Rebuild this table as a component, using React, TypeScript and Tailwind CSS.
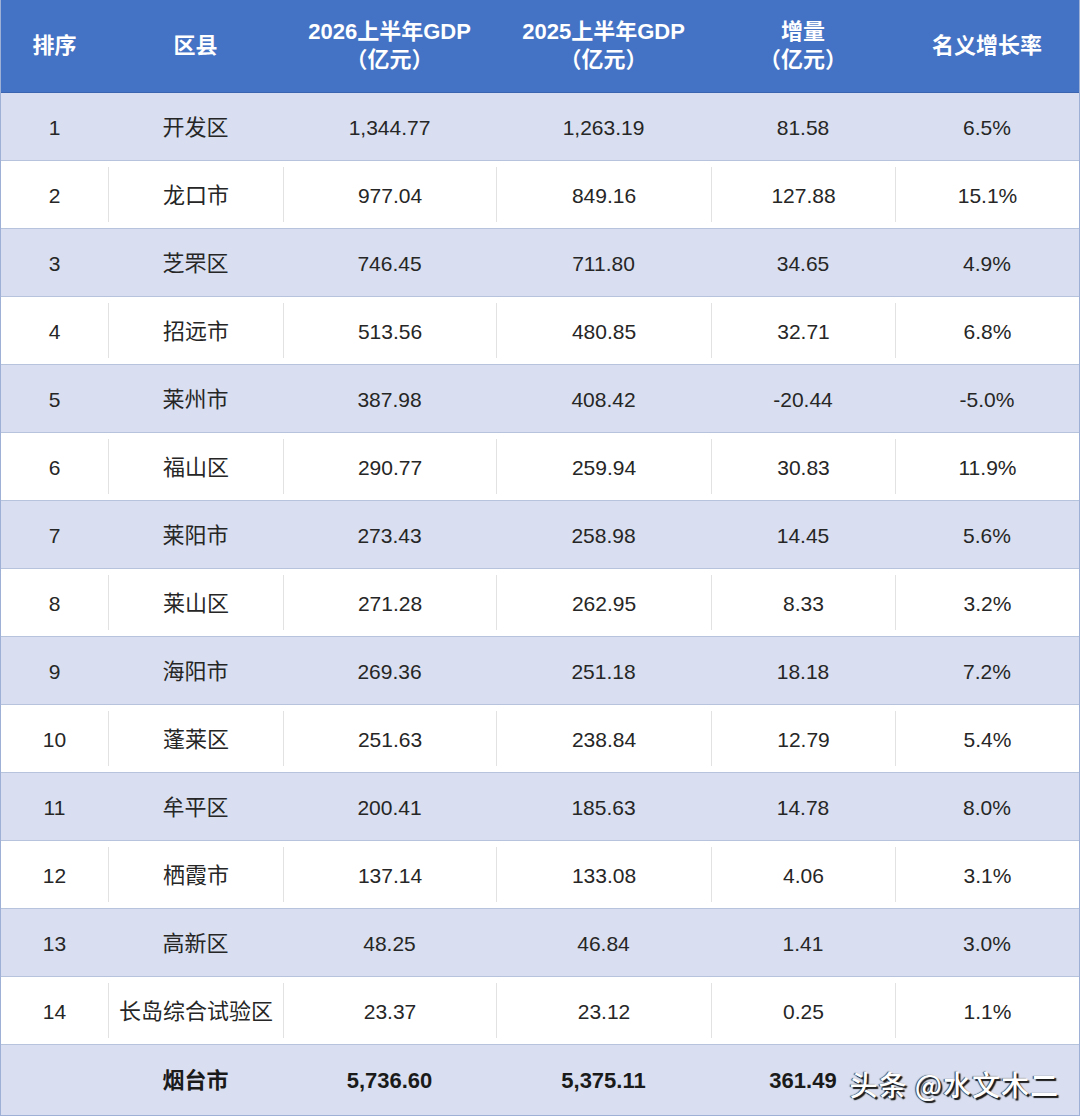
const rows = [
  ['1', '开发区', '1,344.77', '1,263.19', '81.58', '6.5%'],
  ['2', '龙口市', '977.04', '849.16', '127.88', '15.1%'],
  ['3', '芝罘区', '746.45', '711.80', '34.65', '4.9%'],
  ['4', '招远市', '513.56', '480.85', '32.71', '6.8%'],
  ['5', '莱州市', '387.98', '408.42', '-20.44', '-5.0%'],
  ['6', '福山区', '290.77', '259.94', '30.83', '11.9%'],
  ['7', '莱阳市', '273.43', '258.98', '14.45', '5.6%'],
  ['8', '莱山区', '271.28', '262.95', '8.33', '3.2%'],
  ['9', '海阳市', '269.36', '251.18', '18.18', '7.2%'],
  ['10', '蓬莱区', '251.63', '238.84', '12.79', '5.4%'],
  ['11', '牟平区', '200.41', '185.63', '14.78', '8.0%'],
  ['12', '栖霞市', '137.14', '133.08', '4.06', '3.1%'],
  ['13', '高新区', '48.25', '46.84', '1.41', '3.0%'],
  ['14', '长岛综合试验区', '23.37', '23.12', '0.25', '1.1%'],
];

const cols = 'grid grid-cols-[107px_175px_213px_215px_184px_1fr]';

export default function App() {
  return (
    <div className="relative w-[1080px] h-[1116px] overflow-hidden bg-white font-['Liberation_Sans','Noto_Sans_CJK_SC',sans-serif] text-[#262626] border-x border-[#9fb0d6]">
      {/* header */}
      <div className={`${cols} h-[93px] bg-[#4472c4] text-white font-bold text-[22px] leading-[28px] border-b border-[#3a64b0]`}>
        <div className="flex items-center justify-center">排序</div>
        <div className="flex items-center justify-center">区县</div>
        <div className="flex flex-col items-center justify-center">
          <span>2026上半年GDP</span>
          <span>（亿元）</span>
        </div>
        <div className="flex flex-col items-center justify-center">
          <span>2025上半年GDP</span>
          <span>（亿元）</span>
        </div>
        <div className="flex flex-col items-center justify-center">
          <span>增量</span>
          <span>（亿元）</span>
        </div>
        <div className="flex items-center justify-center">名义增长率</div>
      </div>

      {rows.map((r, i) => {
        const striped = i % 2 === 0;
        return (
          <div
            key={r[0]}
            className={`${cols} h-[68px] text-[21px] border-b border-[#b7c2dc] ${striped ? 'bg-[#d9dff0]' : 'bg-white'}`}
          >
            {r.map((v, j) => (
              <div key={j} className="py-[6px]">
                <div
                  className={`h-full flex items-center justify-center pt-[2px] ${j === 1 ? 'text-[22px]' : ''} ${
                    j > 0 && !striped ? 'border-l border-[#e2e2e2]' : ''
                  }`}
                >
                  {v}
                </div>
              </div>
            ))}
          </div>
        );
      })}

      {/* total */}
      <div className={`${cols} h-[71px] bg-[#d9dff0] font-bold text-[22px] text-[#1a1a1a] border-b border-[#9fb0d6]`}>
        <div />
        <div className="flex items-center justify-center">烟台市</div>
        <div className="flex items-center justify-center">5,736.60</div>
        <div className="flex items-center justify-center">5,375.11</div>
        <div className="flex items-center justify-center">361.49</div>
        <div />
      </div>

      <div className="absolute right-[20px] bottom-[18px] text-white text-[28px] font-medium font-['Noto_Sans_CJK_SC',sans-serif] leading-none tracking-[1px] [text-shadow:2px_2px_1px_#1a1a1a,-1px_0_1px_#333]">
        头条 @水文木二
      </div>
    </div>
  );
}
